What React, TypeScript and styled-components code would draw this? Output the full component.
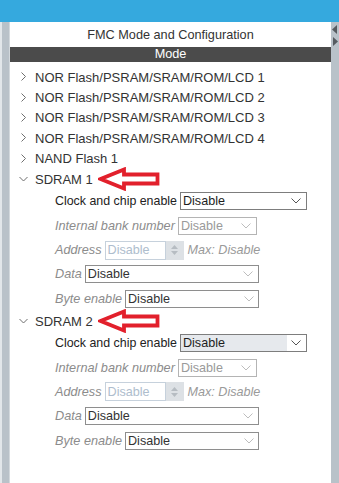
import React from "react";
import styled, { createGlobalStyle } from "styled-components";

const GlobalStyle = createGlobalStyle`
  html, body { margin: 0; padding: 0; background: #fff; }
  body { font-family: "Liberation Sans", Arial, sans-serif; }
`;

const Page = styled.div`
  width: 339px;
  height: 483px;
  display: flex;
  flex-direction: column;
  overflow: hidden;
`;

const TopBar = styled.div`
  height: 22px;
  flex: none;
  background: #35a9de;
`;

const Body = styled.div`
  flex: 1;
  display: flex;
  min-height: 0;
`;

const LeftGutter = styled.div`
  width: 10px;
  flex: none;
  background: linear-gradient(to right, #e2e7ea 0 2px, #b9c2c9 2px 9px, #d3d9dd 9px 10px);
`;

const RightGutter = styled.div`
  width: 8px;
  flex: none;
  background: #b9c2c9;
  display: flex;
  flex-direction: column;
  align-items: center;
  padding-top: 3px;
  gap: 3px;
`;

const Panel = styled.div`
  flex: 1;
  display: flex;
  flex-direction: column;
  background: #fff;
`;

const Title = styled.div`
  height: 25px;
  display: flex;
  align-items: center;
  justify-content: center;
  font-size: 12.7px;
  color: #333;
`;

const ModeBar = styled.div`
  height: 15px;
  line-height: 15px;
  background: #4b4b4b;
  color: #fff;
  font-size: 12.7px;
  text-align: center;
`;

const Tree = styled.div`
  padding-top: 5px;
  display: flex;
  flex-direction: column;
`;

const TreeRow = styled.div`
  height: 20.4px;
  display: flex;
  align-items: center;
  padding-left: 9px;
  font-size: 13px;
  color: #333;
  white-space: nowrap;
`;

const ChevronBox = styled.span`
  width: 16px;
  flex: none;
  display: flex;
  align-items: center;
`;

const TreeLabel = styled.span`
  line-height: 1;
`;

const Callout = styled.svg`
  margin-left: 5px;
  flex: none;
`;

const SubList = styled.div`
  display: flex;
  flex-direction: column;
`;

const SubRow = styled.div`
  height: 24.3px;
  display: flex;
  align-items: center;
  padding-left: 45px;
  gap: 3px;
  font-size: 12.6px;
  white-space: nowrap;
`;

const FieldLabel = styled.span<{ $muted?: boolean }>`
  color: ${(p) => (p.$muted ? "#8c8c8c" : "#222")};
  font-style: ${(p) => (p.$muted ? "italic" : "normal")};
  font-size: ${(p) => (p.$muted ? "12.7px" : "12.4px")};
`;

type SelectKind = "active" | "disabled" | "plain";

const SelectBox = styled.div<{ $w: number; $kind: SelectKind }>`
  width: ${(p) => p.$w}px;
  height: 18px;
  box-sizing: border-box;
  flex: none;
  display: flex;
  border: 1px solid
    ${(p) => (p.$kind === "disabled" ? "#b4b4b4" : p.$kind === "active" ? "#7d7d7d" : "#8e8e8e")};
  background: #fff;
`;

const SelectText = styled.span<{ $kind: SelectKind; $hover?: boolean }>`
  flex: 1;
  display: flex;
  align-items: center;
  padding-left: 2px;
  color: ${(p) => (p.$kind === "disabled" ? "#9a9a9a" : p.$kind === "active" ? "#1e1e1e" : "#333")};
  background: ${(p) => (p.$hover ? "#e6e9ed" : "transparent")};
`;

const SelectArrow = styled.span`
  width: 19px;
  flex: none;
  display: flex;
  align-items: center;
  justify-content: center;
`;

const SpinField = styled.div`
  display: flex;
  flex: none;
`;

const SpinInput = styled.div`
  width: 61px;
  height: 19px;
  box-sizing: border-box;
  display: flex;
  align-items: center;
  padding-left: 2px;
  border: 1px solid #c6d1dc;
  color: #aebdcd;
`;

const Spinner = styled.div`
  width: 18px;
  height: 19px;
  background: #dde1e5;
  display: flex;
  flex-direction: column;
  align-items: center;
  justify-content: center;
  gap: 2px;
`;

const MaxText = styled.span`
  margin-left: 1px;
  color: #9a9a9a;
  font-style: italic;
`;

const Chevron = ({ open }: { open?: boolean }) => (
  <svg width="10" height="10" viewBox="0 0 10 10">
    <polyline
      points={open ? "0.5,3 4.5,7 8.5,3" : "2.5,0.5 6.5,4.5 2.5,8.5"}
      fill="none"
      stroke="#6e6e6e"
      strokeWidth="1"
    />
  </svg>
);

const DownArrow = ({ color }: { color: string }) => (
  <svg width="10" height="6" viewBox="0 0 10 6">
    <polyline points="0.5,0.5 5,5 9.5,0.5" fill="none" stroke={color} strokeWidth="1" />
  </svg>
);

const RedArrow = () => (
  <Callout width="62" height="24" viewBox="0 0 62 24">
    <polygon
      points="2.5,12 26,2.5 26,7.5 59.5,7.5 59.5,16.5 26,16.5 26,21.5"
      fill="#fff"
      stroke="#e2202c"
      strokeWidth="3.8"
      strokeLinejoin="miter"
    />
  </Callout>
);

const GutterArrow = ({ dir }: { dir: "left" | "right" }) => (
  <svg width="6" height="9" viewBox="0 0 6 9">
    <polygon points={dir === "left" ? "5,0 0,4.5 5,9" : "1,0 6,4.5 1,9"} fill="#565b60" />
  </svg>
);

const Tri = ({ up }: { up?: boolean }) => (
  <svg width="7" height="4" viewBox="0 0 7 4">
    <polygon points={up ? "0,4 3.5,0 7,4" : "0,0 3.5,4 7,0"} fill="#b6bcc2" />
  </svg>
);

const Select = ({
  w,
  kind,
  hover,
}: {
  w: number;
  kind: SelectKind;
  hover?: boolean;
}) => (
  <SelectBox $w={w} $kind={kind}>
    <SelectText $kind={kind} $hover={hover}>
      Disable
    </SelectText>
    <SelectArrow>
      <DownArrow color={kind === "active" ? "#555" : "#bdbdbd"} />
    </SelectArrow>
  </SelectBox>
);

const SdramFields = ({ hover }: { hover?: boolean }) => (
  <SubList>
    <SubRow>
      <FieldLabel>Clock and chip enable</FieldLabel>
      <Select w={127} kind="active" hover={hover} />
    </SubRow>
    <SubRow>
      <FieldLabel $muted>Internal bank number</FieldLabel>
      <Select w={79} kind="disabled" />
    </SubRow>
    <SubRow>
      <FieldLabel $muted>Address</FieldLabel>
      <SpinField>
        <SpinInput>Disable</SpinInput>
        <Spinner>
          <Tri up />
          <Tri />
        </Spinner>
      </SpinField>
      <MaxText>Max: Disable</MaxText>
    </SubRow>
    <SubRow>
      <FieldLabel $muted>Data</FieldLabel>
      <Select w={174} kind="plain" />
    </SubRow>
    <SubRow>
      <FieldLabel $muted>Byte enable</FieldLabel>
      <Select w={134} kind="plain" />
    </SubRow>
  </SubList>
);

const collapsed = [
  "NOR Flash/PSRAM/SRAM/ROM/LCD 1",
  "NOR Flash/PSRAM/SRAM/ROM/LCD 2",
  "NOR Flash/PSRAM/SRAM/ROM/LCD 3",
  "NOR Flash/PSRAM/SRAM/ROM/LCD 4",
  "NAND Flash 1",
];

export default function App() {
  return (
    <>
      <GlobalStyle />
      <Page>
        <TopBar />
        <Body>
          <LeftGutter />
          <Panel>
            <Title>FMC Mode and Configuration</Title>
            <ModeBar>Mode</ModeBar>
            <Tree>
              {collapsed.map((t) => (
                <TreeRow key={t}>
                  <ChevronBox>
                    <Chevron />
                  </ChevronBox>
                  <TreeLabel>{t}</TreeLabel>
                </TreeRow>
              ))}
              <TreeRow>
                <ChevronBox>
                  <Chevron open />
                </ChevronBox>
                <TreeLabel>SDRAM 1</TreeLabel>
                <RedArrow />
              </TreeRow>
              <SdramFields />
              <TreeRow>
                <ChevronBox>
                  <Chevron open />
                </ChevronBox>
                <TreeLabel>SDRAM 2</TreeLabel>
                <RedArrow />
              </TreeRow>
              <SdramFields hover />
            </Tree>
          </Panel>
          <RightGutter>
            <GutterArrow dir="left" />
            <GutterArrow dir="right" />
          </RightGutter>
        </Body>
      </Page>
    </>
  );
}
